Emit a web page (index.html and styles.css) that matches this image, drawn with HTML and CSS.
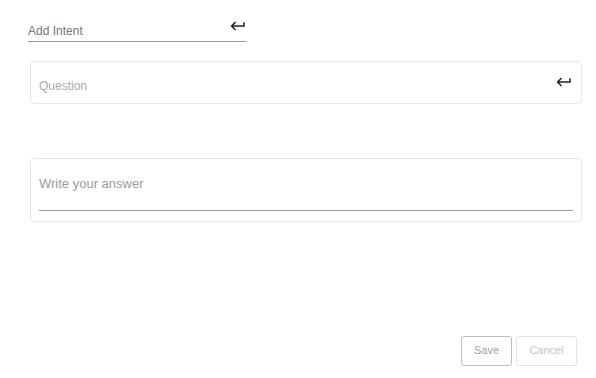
FILE: index.html
```html
<!DOCTYPE html>
<html>
<head>
  <title>Add Intent</title>
  <link rel="stylesheet" href="styles.css">
</head>
<body>
  <div class="page">
    <div class="intent-field">
      <span class="placeholder">Add Intent</span>
      <svg class="return-icon" viewBox="0 0 24 24" width="18" height="18"><path d="M19 7v4H5.83l3.58-3.59L8 6l-6 6 6 6 1.41-1.41L5.83 13H21V7z"/></svg>
    </div>

    <div class="card question-card">
      <span class="placeholder">Question</span>
      <svg class="return-icon" viewBox="0 0 24 24" width="18" height="18"><path d="M19 7v4H5.83l3.58-3.59L8 6l-6 6 6 6 1.41-1.41L5.83 13H21V7z"/></svg>
    </div>

    <div class="card answer-card">
      <div class="answer-input">
        <span class="placeholder answer-text">Write your answer</span>
      </div>
    </div>

    <div class="actions">
      <button class="btn btn-save">Save</button>
      <button class="btn btn-cancel">Cancel</button>
    </div>
  </div>
</body>
</html>
```

FILE: styles.css
```css
* {
  margin: 0;
  padding: 0;
  box-sizing: border-box;
}

body {
  font-family: 'Liberation Sans', Arial, sans-serif;
  background: #fff;
  color: #333;
  width: 596px;
  height: 378px;
  overflow: hidden;
}

.page {
  padding-top: 18px;
}

.placeholder {
  font-size: 12px;
  color: #9e9e9e;
}

.return-icon {
  fill: #222;
  display: block;
}

.intent-field {
  margin-left: 28px;
  width: 218px;
  height: 24px;
  border-bottom: 1px solid #9a9a9a;
  display: flex;
  justify-content: space-between;
  align-items: flex-start;
}

.intent-field .placeholder {
  color: #757575;
  padding-top: 6px;
}

.intent-field .return-icon {
  margin-top: -1px;
  margin-right: -1px;
}

.card {
  margin-left: 30px;
  width: 552px;
  border: 1px solid #e8e8e8;
  border-radius: 4px;
  background: #fff;
}

.question-card {
  margin-top: 19px;
  height: 43px;
  padding: 0 8px 0 8px;
  display: flex;
  justify-content: space-between;
  align-items: center;
}

.question-card .placeholder {
  color: #a8a8a8;
  padding-top: 7px;
}

.question-card .return-icon {
  margin-top: -2px;
}

.answer-card {
  margin-top: 54px;
  height: 64px;
  padding: 0 8px;
}

.answer-input {
  height: 52px;
  border-bottom: 1px solid #9a9a9a;
  padding-top: 15px;
}

.answer-text {
  font-size: 13px;
  color: #9a9a9a;
}

.actions {
  margin-top: 114px;
  padding-right: 19px;
  display: flex;
  justify-content: flex-end;
  gap: 4px;
}

.btn {
  font-family: 'Liberation Sans', Arial, sans-serif;
  font-size: 11px;
  height: 30px;
  padding-bottom: 3px;
  background: #fff;
  border-radius: 3px;
  cursor: pointer;
}

.btn-save {
  width: 51px;
  border: 1px solid #bdbdbd;
  color: #a0a0a0;
}

.btn-cancel {
  width: 61px;
  border: 1px solid #e2e2e2;
  color: #c4c4c4;
}
```
